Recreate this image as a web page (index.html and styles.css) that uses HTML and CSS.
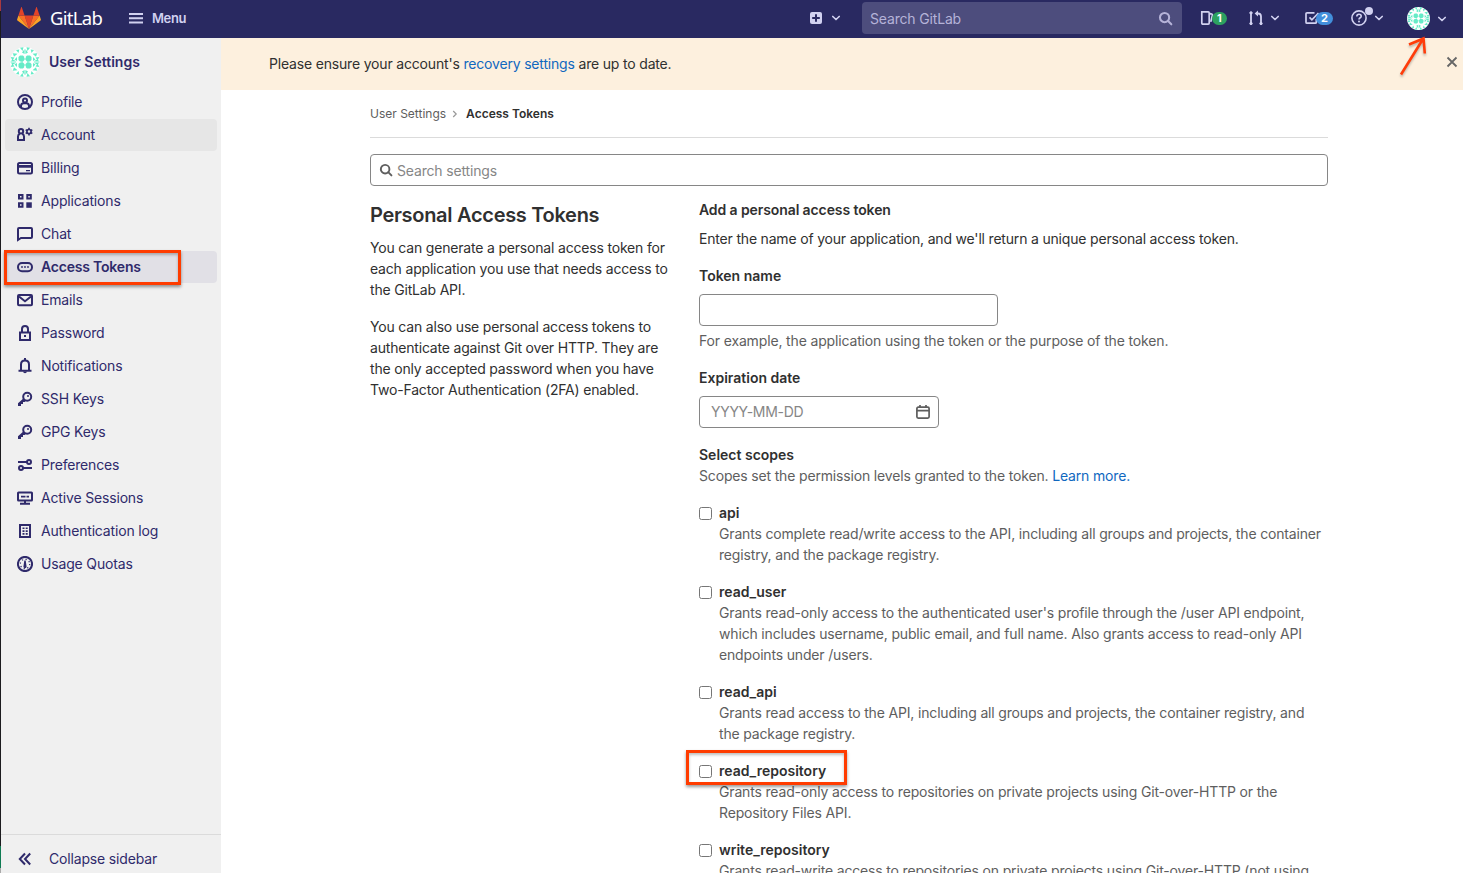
FILE: index.html
```html
<!DOCTYPE html>
<html lang="en">
<head>
<meta charset="utf-8">
<title>Access Tokens · User Settings · GitLab</title>
<link rel="stylesheet" href="styles.css">
</head>
<body>
<svg class="defs" width="0" height="0">
  <symbol id="avatar" viewBox="0 0 30 30">
    <circle cx="15" cy="15" r="15" fill="#fff"/>
    <g fill="#65ebc7">
      <g id="quad">
        <path d="M10 8.500h3l1.200 1.300v1.700h.8v1h-.8v.7l-1.200 1.300h-.5v.5h-1v-.5H10L8.500 13v-3z"/>
        <path d="M6 3 9.300 2.500 8.500 6zM10 .8l3.500-.6L12.500 4zM12 5.500 14.600 2v5zM2.800 6.200l4.700.5-3.500 3zM.8 10l3.700.5L2.300 13.500zM.2 14.600 3 12.500l3.500 2.100zM4.500 12.500 7 10v4z"/>
      </g>
      <use href="#quad" transform="matrix(-1 0 0 1 30 0)"/>
      <use href="#quad" transform="matrix(1 0 0 -1 0 30)"/>
      <use href="#quad" transform="matrix(-1 0 0 -1 30 30)"/>
    </g>
  </symbol>
  <symbol id="search" viewBox="0 0 16 16"><circle cx="7" cy="7" r="4.900" fill="none" stroke="currentColor" stroke-width="2.200"/><path d="m10.500 10.500 3.700 3.700" stroke="currentColor" stroke-width="2.200" stroke-linecap="round"/></symbol>
  <symbol id="chevron" viewBox="0 0 10 10"><path d="M1.800 3.500 5 6.500l3.200-3" fill="none" stroke="currentColor" stroke-width="1.700" stroke-linecap="round" stroke-linejoin="round"/></symbol>
  <symbol id="key" viewBox="0 0 16 16"><circle cx="10.200" cy="5.800" r="4" fill="none" stroke="currentColor" stroke-width="2"/><circle cx="11" cy="5" r="1" fill="currentColor"/><path fill="currentColor" d="M6.300 7.500 1 12.300V15h3v-2h2v-2h1.700l1.300-1.200z"/></symbol>
</svg>
<div class="screen">
  <header class="topbar">
    <a class="brand">
      <svg class="logo" width="24" height="23" viewBox="0 0 24 23">
        <path fill="#e24329" d="M12 22 7.600 8.500h8.800z"/>
        <path fill="#fc6d26" d="M12 22 7.600 8.500H1.400zM12 22l4.400-13.500h6.200z"/>
        <path fill="#fca326" d="M1.400 8.500.1 12.600c-.1.400 0 .800.300 1L12 22zM22.600 8.500l1.300 4.100c.1.400 0 .800-.3 1L12 22z"/>
        <path fill="#e24329" d="M1.400 8.500h6.200L4.900.4c-.1-.4-.7-.4-.8 0zM22.600 8.500h-6.200L19.100.4c.1-.4.700-.4.800 0z"/>
      </svg>
      <span class="wordmark">GitLab</span>
    </a>
    <a class="menu">
      <svg width="14" height="12" viewBox="0 0 14 12" fill="currentColor"><path d="M0 1h14v2H0zM0 5.200h14v2H0zM0 9.400h14v2H0z"/></svg>
      <span>Menu</span>
    </a>
    <div class="create">
      <svg width="12" height="12" viewBox="0 0 12 12"><rect width="12" height="12" rx="2" fill="currentColor"/><path d="M6 2.200v7.600M2.200 6h7.600" stroke="#292961" stroke-width="2"/></svg>
      <svg width="10" height="10"><use href="#chevron"/></svg>
    </div>
    <div class="global-search"><span>Search GitLab</span><svg width="15" height="15"><use href="#search"/></svg></div>
    <div class="tool issues">
      <svg width="16" height="16" viewBox="0 0 16 16" fill="none" stroke="currentColor" stroke-width="1.700"><path d="M1.800 1.900h6.400q1 0 1 1v10.200q0 1-1 1H2.800q-1 0-1-1zM9.200 3.200l2.500.8q.9.300.7 1.300l-1.600 6.500"/></svg>
      <span class="count green">1</span>
    </div>
    <div class="tool merges">
      <svg width="16" height="16" viewBox="0 0 16 16" fill="none" stroke="currentColor" stroke-width="1.800"><path d="M3 3v11M13 13.500V6.500q0-3-3-3H8"/><circle cx="3" cy="2.900" r="1.200" fill="currentColor" stroke-width="1"/><circle cx="3" cy="13.500" r="1.200" fill="currentColor" stroke-width="1"/><circle cx="13" cy="13.500" r="1.200" fill="currentColor" stroke-width="1"/><path d="M10 .5v6L6.600 3.500z" fill="currentColor" stroke="none"/></svg>
      <svg width="10" height="10"><use href="#chevron"/></svg>
    </div>
    <div class="tool todos">
      <svg width="16" height="16" viewBox="0 0 16 16" fill="none" stroke="currentColor" stroke-width="1.700"><path d="M10.500 2.900H3q-1 0-1 1v8.300q0 1 1 1h8.300q1 0 1-1V9"/><path d="m5.500 7.400 2.400 2.400L14.500 3"/></svg>
      <span class="count blue">2</span>
    </div>
    <div class="tool help">
      <svg width="16" height="16" viewBox="0 0 16 16" fill="none" stroke="currentColor" stroke-width="1.600"><circle cx="8" cy="8" r="7.100"/><path d="M5.800 6.500q0-2.300 2.200-2.300t2.200 2q0 1-1 1.600Q8 8.500 8 9.600"/><circle cx="8" cy="11.600" r="1" fill="currentColor" stroke="none"/></svg>
      <span class="dot"></span>
      <svg width="10" height="10"><use href="#chevron"/></svg>
    </div>
    <div class="tool user">
      <svg width="23" height="23"><use href="#avatar"/></svg>
      <svg width="10" height="10"><use href="#chevron"/></svg>
    </div>
  </header>

  <div class="page">
    <aside class="sidebar">
      <div class="context"><svg width="30" height="30"><use href="#avatar"/></svg><span>User Settings</span></div>
      <nav class="nav">
        <a class="item"><svg viewBox="0 0 16 16"><circle cx="8" cy="8" r="7" class="s"/><circle cx="8" cy="6.600" r="2" class="s"/><path class="s" d="M4 13.200V12q0-2.800 2.600-2.800h2.800q2.600 0 2.600 2.800v1.200"/></svg><span>Profile</span></a>
        <a class="item hover"><svg viewBox="0 0 16 16"><circle cx="4" cy="4.300" r="2.200" class="s"/><path class="s" d="M2.800 6.800Q1 7.500 1 9.500V13h6V9.500Q7 7.500 5.200 6.800"/><circle cx="12" cy="4.600" r="2.100" fill="none" stroke="currentColor" stroke-width="1.700"/><path stroke="currentColor" stroke-width="1.600" d="M12 .8v1.700M12 6.700v1.700M8.700 2.700l1.500.9M13.800 5.600l1.500.9M8.700 6.500l1.500-.9M13.800 3.600l1.500-.9"/></svg><span>Account</span></a>
        <a class="item"><svg viewBox="0 0 16 16"><rect x="1" y="3" width="14" height="10.400" rx="1.500" class="s"/><path class="f" d="M1 5h14v2.700H1zM9 10h4v1.200H9z"/></svg><span>Billing</span></a>
        <a class="item"><svg viewBox="0 0 16 16"><path class="s" d="M2 2h3.500v3.500H2zM10.300 2h3.500v3.500h-3.500zM2 10.300h3.500v3.500H2z"/><path class="f" d="M9.300 9.300h5.500v5.500H9.300z"/></svg><span>Applications</span></a>
        <a class="item"><svg viewBox="0 0 16 16"><path class="s" d="M1 14V3q0-1 1-1h12q1 0 1 1v8q0 1-1 1H4z"/></svg><span>Chat</span></a>
        <a class="item active"><svg viewBox="0 0 16 16"><rect x="1" y="4" width="14" height="8.300" rx="4" class="s"/><circle cx="5" cy="8" r=".9" class="f"/><circle cx="8" cy="8" r=".9" class="f"/><circle cx="11" cy="8" r=".9" class="f"/></svg><span>Access Tokens</span></a>
        <a class="item"><svg viewBox="0 0 16 16"><rect x="1" y="3" width="14" height="10.300" rx="1" class="s"/><path class="s" d="m2 4.500 6 4.700 6-4.700"/></svg><span>Emails</span></a>
        <a class="item"><svg viewBox="0 0 16 16"><path class="s" d="M3 7.500h10V15H3zM5 7V4a3 3 0 0 1 6 0v3"/><path class="f" d="M7 10h2v2H7z"/></svg><span>Password</span></a>
        <a class="item"><svg viewBox="0 0 16 16"><path class="s" d="M4 12V6.500Q4 2.500 8 2.500t4 4V12M1.500 12.700h13"/><path class="f" d="M7 0h2v3H7zM6 13.500h4Q9.700 15.200 8 15.200T6 13.500z"/></svg><span>Notifications</span></a>
        <a class="item"><svg><use href="#key"/></svg><span>SSH Keys</span></a>
        <a class="item"><svg><use href="#key"/></svg><span>GPG Keys</span></a>
        <a class="item"><svg viewBox="0 0 16 16"><path class="s" d="M1 5h9M6 11h9"/><circle cx="12" cy="5" r="2" class="s"/><circle cx="4" cy="11" r="2" class="s"/></svg><span>Preferences</span></a>
        <a class="item"><svg viewBox="0 0 16 16"><rect x="1" y="2.500" width="14" height="8" rx=".5" class="s"/><path class="f" d="M4 5.700h4.500v1.800H4zM9.500 5.700h2.500v1.800H9.500zM7 11h2v2H7zM3 12.700h10v2H3z"/></svg><span>Active Sessions</span></a>
        <a class="item"><svg viewBox="0 0 16 16"><path class="s" d="M3 2h10v12H3z"/><path class="f" d="M5.500 4.500h2v1.600h-2zM8.700 4.500h2v1.600h-2zM5.500 7.300h2v1.600h-2zM8.700 7.300h2v1.600h-2zM5.500 10.100h2v1.600h-2zM8.700 10.100h2v1.600h-2z"/></svg><span>Authentication log</span></a>
        <a class="item"><svg viewBox="0 0 16 16"><circle cx="8" cy="8" r="7.100" class="s"/><circle cx="8" cy="8" r="4.700" fill="none" stroke="currentColor" stroke-width="1.200" stroke-dasharray="1.200 2.490"/><path class="f" d="M7.300 4.500h1.400l.8 5.500a1.600 1.600 0 1 1-3 0z"/></svg><span>Usage Quotas</span></a>
      </nav>
      <div class="collapse"><svg width="14" height="14" viewBox="0 0 14 14"><path class="s" d="M7 1.500 1.800 7 7 12.500M12.200 1.500 7 7l5.200 5.500"/></svg><span>Collapse sidebar</span></div>
    </aside>

    <main class="main">
      <div class="alert">
        <p>Please ensure your account's <a>recovery settings</a> are up to date.</p>
        <svg width="12" height="12" viewBox="0 0 12 12"><path d="m1.500 1.500 9 9m0-9-9 9" stroke="#666" stroke-width="1.800"/></svg>
      </div>
      <div class="content">
        <div class="crumbs"><span>User Settings</span><svg width="6" height="8" viewBox="0 0 6 8"><path d="m1.200 1 3 3-3 3" fill="none" stroke="#999" stroke-width="1.200"/></svg><b>Access Tokens</b></div>
        <div class="settings-search"><svg width="14" height="14"><use href="#search"/></svg><span>Search settings</span></div>
        <div class="columns">
          <section class="about">
            <h4>Personal Access Tokens</h4>
            <p>You can generate a personal access token for<br>each application you use that needs access to<br>the GitLab API.</p>
            <p>You can also use personal access tokens to<br>authenticate against Git over HTTP. They are<br>the only accepted password when you have<br>Two-Factor Authentication (2FA) enabled.</p>
          </section>
          <section class="form">
            <h5>Add a personal access token</h5>
            <p class="intro">Enter the name of your application, and we'll return a unique personal access token.</p>
            <label>Token name</label>
            <div class="field name"></div>
            <p class="hint name-hint">For example, the application using the token or the purpose of the token.</p>
            <label>Expiration date</label>
            <div class="field date"><span>YYYY-MM-DD</span><svg width="14" height="14" viewBox="0 0 14 14" fill="none" stroke="#5e5e5e" stroke-width="1.700"><rect x=".9" y="2.200" width="12.200" height="10.900" rx="1.300"/><path d="M1 5.700h12M4 0v3M10 0v3"/></svg></div>
            <label class="scopes">Select scopes</label>
            <p class="hint">Scopes set the permission levels granted to the token. <a>Learn more.</a></p>
            <div class="scope-list">
              <div class="scope"><i class="box"></i><b>api</b><p>Grants complete read/write access to the API, including all groups and projects, the container<br>registry, and the package registry.</p></div>
              <div class="scope"><i class="box"></i><b>read_user</b><p>Grants read-only access to the authenticated user's profile through the /user API endpoint,<br>which includes username, public email, and full name. Also grants access to read-only API<br>endpoints under /users.</p></div>
              <div class="scope"><i class="box"></i><b>read_api</b><p>Grants read access to the API, including all groups and projects, the container registry, and<br>the package registry.</p></div>
              <div class="scope"><i class="box"></i><b>read_repository</b><p>Grants read-only access to repositories on private projects using Git-over-HTTP or the<br>Repository Files API.</p></div>
              <div class="scope"><i class="box"></i><b>write_repository</b><p>Grants read-write access to repositories on private projects using Git-over-HTTP (not using</p></div>
            </div>
          </section>
        </div>
      </div>
    </main>
  </div>
  <div class="mark mark-nav"></div>
  <div class="mark mark-scope"></div>
  <svg class="arrow" width="34" height="46" viewBox="0 0 34 46"><path d="M6 39.500 28 4M14 9.500l14.500-6 1.300 15" fill="none" stroke="#ff3c0a" stroke-width="2.600"/></svg>
</div>
</body>
</html>
```
FILE: styles.css
```css
* { box-sizing: border-box; }
body { margin: 0; background: #fff; overflow: hidden; font: 14px/21px Inter, "Liberation Sans", sans-serif; letter-spacing: -0.166px; color: #303030; }
p, h4, h5 { margin: 0; }
svg { display: block; flex: none; }
.defs { position: absolute; }
a { color: #1068bf; }
.screen { position: relative; width: 1463px; height: 873px; overflow: hidden; display: flex; flex-direction: column; border-left: 1px solid; border-image: linear-gradient(#a8393f 0 12px, #1c1b1e 12px 845px, #0f7b53 845px 867px, #aaa 867px) 1; white-space: nowrap; }

.topbar { height: 38px; flex: none; background: #292961; color: #d1d1f0; display: flex; align-items: center; padding-bottom: 2px; }
.topbar a { color: inherit; display: flex; align-items: center; }
.brand { width: 128px; padding-left: 16px; }
.logo { margin-right: 9px; }
.topbar .wordmark { color: #fff; font: 18.500px/24px "Noto Sans", sans-serif; letter-spacing: -0.7px; }
.topbar .menu { font-size: 13px; font-weight: 600; gap: 9px; width: 681px; letter-spacing: -0.4px; }
.create { display: flex; align-items: center; gap: 9px; width: 52px; }
.global-search { width: 320px; height: 32px; background: #4d4d7d; border-radius: 4px; display: flex; align-items: center; justify-content: space-between; padding: 0 9px 0 8px; color: #b5b3d8; }
.tool { display: flex; align-items: center; position: relative; }
.issues { margin-left: 18px; width: 48px; }
.merges { width: 56px; gap: 6px; }
.todos { width: 47px; }
.help { width: 56px; gap: 7px; }
.user { gap: 7px; padding-top: 1px; }
.count { margin-left: -3px; z-index: 1; height: 13px; border-radius: 7px; color: #fff; font-size: 11px; line-height: 13px; font-weight: 700; letter-spacing: 0; padding: 0 5px; }
.green { background: #2da160; margin-left: -4px; }
.blue { background: #428fdc; }
.todos .count { margin-left: -4px; }
.dot { position: absolute; left: 14px; top: -3px; width: 8px; height: 8px; border-radius: 50%; background: #d1d1f0; }

.page { flex: 1; min-height: 0; display: flex; }
.sidebar { width: 220px; background: #f0f0f0; color: #2f2a6b; display: flex; flex-direction: column; flex: none; }
.context { height: 48px; display: flex; align-items: center; gap: 9px; padding-left: 9px; font-weight: 600; letter-spacing: 0; }
.context span, .item span, .collapse span { padding-bottom: 2px; }
.nav { padding: 0 4px; display: flex; flex-direction: column; gap: 1px; flex: 1; }
.item { height: 32px; display: flex; align-items: center; gap: 8px; padding-left: 12px; border-radius: 4px; color: inherit; }
.item svg { width: 16px; height: 16px; }
.s { fill: none; stroke: currentColor; stroke-width: 2; }
.f { fill: currentColor; }
.hover { background: #e6e6e6; }
.active { background: #e1e0e6; font-weight: 600; letter-spacing: -0.2px; }
.collapse { height: 39px; border-top: 1px solid #dbdbdb; display: flex; align-items: center; gap: 17px; padding: 10px 0 0 17px; }

.main { flex: 1; min-width: 0; }
.alert { height: 52px; background: #fdf0de; display: flex; align-items: center; justify-content: space-between; padding: 0 5px 0 48px; letter-spacing: -0.18px; }
.alert p { padding-bottom: 2px; }
.alert svg { margin-top: -4px; }
.content { width: 958px; margin-left: 149px; }
.crumbs { height: 48px; border-bottom: 1px solid #dbdbdb; display: flex; align-items: center; font-size: 12px; letter-spacing: 0; color: #5e5e5e; }
.crumbs svg { margin: 0 8px 0 6px; }
.crumbs b { color: #303030; font-weight: 600; }
.settings-search { margin-top: 16px; height: 32px; border: 1px solid #868686; border-radius: 4px; display: flex; align-items: center; gap: 4px; padding-left: 8px; color: #868686; }
.settings-search svg { color: #5e5e5e; }
.columns { display: grid; grid-template-columns: 329px 629px; padding-top: 13px; }
.about h4 { font-size: 20px; line-height: 28px; font-weight: 600; letter-spacing: -0.3px; margin: 2px 0 8px; }
.about p { margin-bottom: 16px; letter-spacing: -0.185px; }
h5, label, .scope b { font-size: 14px; font-weight: 600; display: block; letter-spacing: 0; }
.form h5 { letter-spacing: -0.1px; }
.form .intro { margin: 8px 0 16px; letter-spacing: -0.185px; }
.field { height: 32px; border: 1px solid #868686; border-radius: 4px; margin-top: 8px; display: flex; align-items: center; justify-content: space-between; padding: 0 8px 0 11px; color: #868686; }
.field span { letter-spacing: -0.3px; padding-bottom: 1px; }
.name { width: 299px; }
.date { width: 240px; }
.hint { color: #5e5e5e; }
.name-hint { margin: 4px 0 16px; letter-spacing: -0.15px; }
.scopes { margin-top: 16px; }
.scope-list { padding-top: 16px; display: grid; gap: 16px; }
.scope { display: grid; grid-template-columns: 20px 1fr; align-items: center; }
.scope p { grid-column: 2; color: #5e5e5e; }
.box { width: 13px; height: 13px; margin-top: 1px; border: 1px solid #767676; border-radius: 2.500px; background: #fff; }

.mark { position: absolute; border: 3px solid #ff3c00; box-shadow: 0 2px 3px rgba(0,0,0,.4), inset 0 2px 3px rgba(0,0,0,.25); }
.mark-nav { left: 3px; top: 250px; width: 177px; height: 35px; }
.mark-scope { left: 685px; top: 750px; width: 161px; height: 35px; }
.arrow { position: absolute; left: 1394px; top: 35px; filter: drop-shadow(0 2px 1px rgba(0,0,0,.25)); }
```
